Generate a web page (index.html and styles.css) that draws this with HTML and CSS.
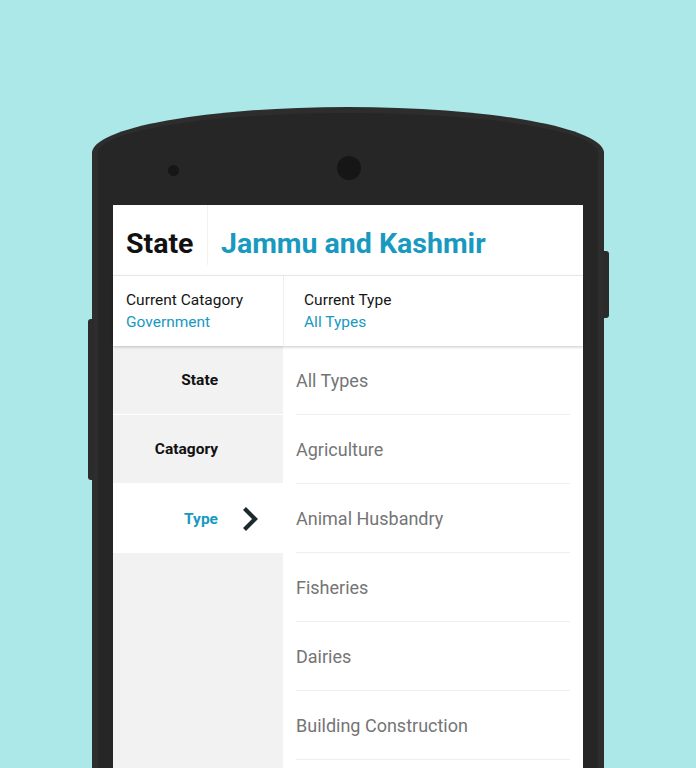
FILE: index.html
```html
<!DOCTYPE html>
<html lang="en">

<head>
    <meta charset="UTF-8">
    <meta name="viewport" content="width=device-width, initial-scale=1.0">
    <title>Type Picker</title>
    <link rel="stylesheet" href="styles.css">
</head>

<body>
    <div class="phone">
        <div class="side-button side-left"></div>
        <div class="side-button side-right"></div>

        <!-- Speaker and camera -->
        <div class="phone-top">
            <div class="sensor"></div>
            <div class="camera"></div>
        </div>

        <div class="screen">
            <div class="state-header">
                <div class="state-label">State</div>
                <div class="state-name">Jammu and Kashmir</div>
            </div>

            <div class="current-bar">
                <div class="current-cell current-category">
                    <div class="current-title">Current Catagory</div>
                    <div class="current-value">Government</div>
                </div>
                <div class="current-cell current-type">
                    <div class="current-title">Current Type</div>
                    <div class="current-value">All Types</div>
                </div>
            </div>

            <div class="picker">
                <div class="picker-nav">
                    <div class="nav-item"><span class="nav-label">State</span></div>
                    <div class="nav-item"><span class="nav-label">Catagory</span></div>
                    <div class="nav-item active">
                        <span class="nav-label">Type</span>
                        <svg class="chevron" width="16" height="26" viewBox="0 0 16 26">
                            <path d="M2.5 2.5 L13 13 L2.5 23.5" fill="none" stroke="#1c2a30" stroke-width="4.2" />
                        </svg>
                    </div>
                </div>

                <ul class="type-list">
                    <li>All Types</li>
                    <li>Agriculture</li>
                    <li>Animal Husbandry</li>
                    <li>Fisheries</li>
                    <li>Dairies</li>
                    <li>Building Construction</li>
                </ul>
            </div>
        </div>
    </div>
</body>

</html>
```

FILE: styles.css
```css
body {
    background-color: #ade8e9;
    font-family: 'Roboto', 'Liberation Sans', sans-serif;
    margin: 0;
    height: 768px;
    overflow: hidden;
}

.phone {
    position: relative;
    box-sizing: border-box;
    width: 512px;
    height: 720px;
    margin: 107px 0 0 92px;
    background-color: #262626;
    border: 6px solid #2d2d2d;
    border-bottom: none;
    border-radius: 256px 256px 0 0 / 46px 46px 0 0;
    padding: 0 15px;
}

.side-button {
    position: absolute;
    width: 6px;
    background-color: #2b2b2b;
}

.side-left {
    left: -10px;
    top: 206px;
    height: 161px;
    border-radius: 3px 0 0 3px;
}

.side-right {
    right: -11px;
    top: 138px;
    height: 67px;
    border-radius: 0 3px 3px 0;
}

.phone-top {
    height: 92px;
    display: flex;
    align-items: flex-start;
}

.sensor {
    width: 11px;
    height: 11px;
    border-radius: 50%;
    background-color: #161616;
    margin: 52px 0 0 55px;
}

.camera {
    width: 24px;
    height: 24px;
    border-radius: 50%;
    background-color: #161616;
    margin: 43px 0 0 158px;
}

.screen {
    background-color: #ffffff;
    height: 620px;
    display: flex;
    flex-direction: column;
}

/* State header */
.state-header {
    display: flex;
    flex-shrink: 0;
    height: 71px;
    border-bottom: 1px solid #eeeeee;
    box-sizing: border-box;
}

.state-label,
.state-name {
    font-size: 28.5px;
    font-weight: bold;
    line-height: 33px;
    padding-top: 22px;
}

.state-label {
    color: #111111;
    width: 81px;
    padding-left: 13px;
    height: 38px;
    border-right: 1px solid #f2f2f2;
}

.state-name {
    color: #1899c0;
    padding-left: 13px;
}

/* Current selection bar */
.current-bar {
    display: flex;
    flex-shrink: 0;
    height: 70px;
    position: relative;
    z-index: 1;
    background-color: #ffffff;
    box-shadow: 0 1px 3px rgba(0, 0, 0, 0.22);
}

.current-cell {
    padding-top: 13px;
    font-size: 15.5px;
    line-height: 22px;
}

.current-category {
    width: 157px;
    padding-left: 13px;
    border-right: 1px solid #eeeeee;
}

.current-type {
    padding-left: 20px;
}

.current-title {
    color: #151515;
}

.current-value {
    color: #1899c0;
}

/* Picker */
.picker {
    display: flex;
    flex: 1;
}

.picker-nav {
    width: 170px;
    background-color: #f2f2f2;
}

.nav-item {
    height: 68px;
    border-bottom: 1px solid #ffffff;
    display: flex;
    align-items: center;
    font-size: 15.5px;
    font-weight: bold;
    color: #111111;
}

.nav-item.active {
    background-color: #ffffff;
    color: #1899c0;
    height: 69px;
    border-bottom: none;
}

.nav-label {
    width: 105px;
    text-align: right;
}

.chevron {
    margin-left: 24px;
}

.type-list {
    list-style: none;
    margin: 0;
    padding: 0 13px;
    flex: 1;
}

.type-list li {
    height: 68px;
    border-bottom: 1px solid #eeeeee;
    display: flex;
    align-items: center;
    font-size: 18px;
    color: #757575;
}
```
